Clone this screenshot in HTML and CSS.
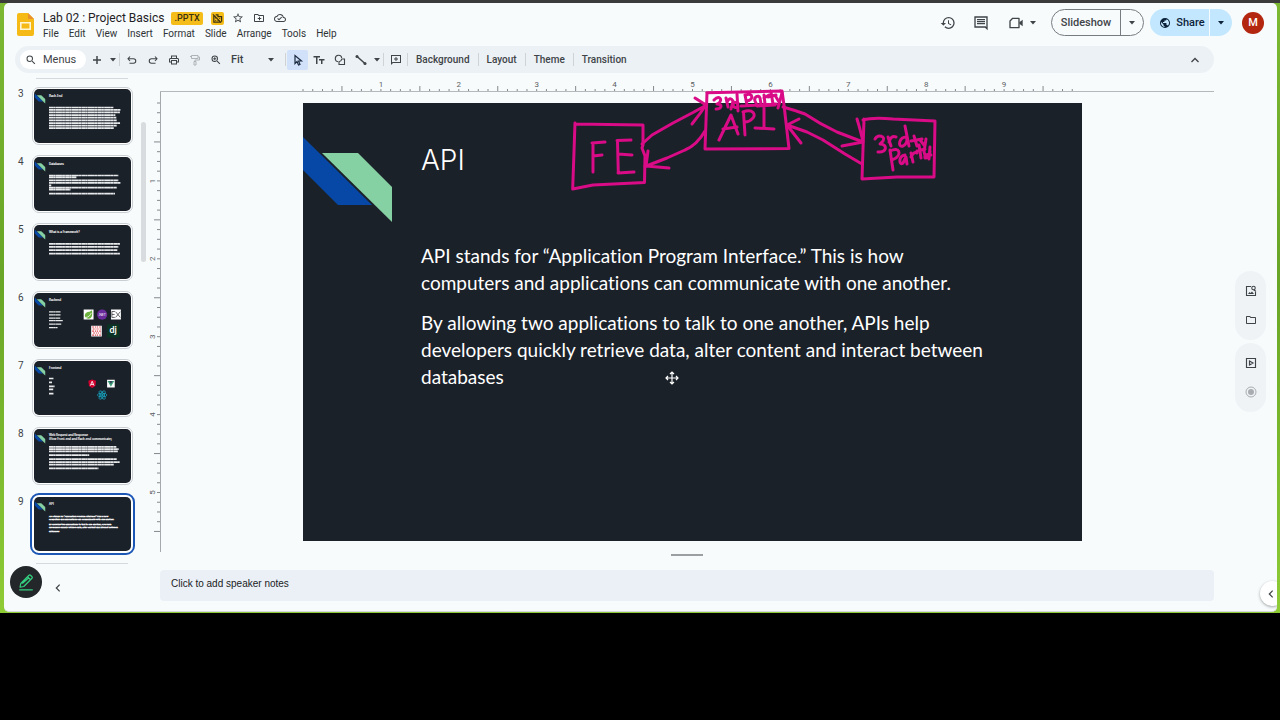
FILE: index.html
```html
<!DOCTYPE html>
<html lang="en">
<head>
  <meta charset="UTF-8">
  <meta name="viewport" content="width=device-width, initial-scale=1.0">
  <title>Lab 02 : Project Basics</title>
  <link rel="stylesheet" href="styles.css">
</head>
<body>
  <svg class="defs" aria-hidden="true">
    <symbol id="ribbon" viewBox="0 0 90 120">
      <path fill="#0748a6" d="M0 34 69 102H35L0 67z"/>
      <path fill="#86d1a3" d="M19 50H55L89 84V119z"/>
    </symbol>
    <symbol id="caret" viewBox="0 0 6 4"><path d="M0 0h6L3 3.5z"/></symbol>
  </svg>

  <div class="desktop">
    <div class="app">
      <header class="header">
        <svg class="logo" viewBox="0 0 17 23">
          <path fill="#f5ba15" d="M2 0h9l6 6v15a2 2 0 0 1-2 2H2a2 2 0 0 1-2-2V2a2 2 0 0 1 2-2z"/>
          <path fill="#e8912d" d="M11 0l6 6h-6z"/>
          <path fill="none" stroke="#fff6d8" stroke-width="1.6" d="M3.8 9.8h9.4v6.4H3.8z"/>
        </svg>
        <div class="doc">
          <div class="doc-row">
            <h1>Lab 02 : Project Basics</h1>
            <span class="badge">.PPTX</span>
            <span class="badge badge-icon">
              <svg viewBox="0 0 24 24"><path d="M2 3l18 18M4 6v14h14M8 4h5v4h8v11M8 10v2M8 15v2M12 16h2M16 12h2" fill="none" stroke="#3b3010" stroke-width="2.6"/></svg>
            </span>
            <button class="icon-btn small" aria-label="Star"><svg viewBox="0 0 24 24"><path d="M22 9.24l-7.19-.62L12 2 9.19 8.63 2 9.24l5.46 4.73L5.82 21 12 17.27 18.18 21l-1.63-7.03L22 9.24zM12 15.4l-3.76 2.27 1-4.28-3.32-2.88 4.38-.38L12 6.1l1.71 4.04 4.38.38-3.32 2.88 1 4.28L12 15.4z"/></svg></button>
            <button class="icon-btn small" aria-label="Move"><svg viewBox="0 0 24 24"><path d="M20 6h-8l-2-2H4c-1.100 0-2 .9-2 2v12c0 1.100.9 2 2 2h16c1.100 0 2-.9 2-2V8c0-1.100-.9-2-2-2zm0 12H4V6h5.200l2 2H20v10zM12 12H9.500v2H12v2.500h2V14h2.500v-2H14V9.500h-2z"/></svg></button>
            <button class="icon-btn small" aria-label="Saved to Drive"><svg viewBox="0 0 24 24"><path d="M19.350 10.040A7.490 7.490 0 0 0 12 4C9.110 4 6.600 5.640 5.350 8.040A5.994 5.994 0 0 0 0 14c0 3.310 2.690 6 6 6h13c2.760 0 5-2.240 5-5 0-2.640-2.050-4.780-4.650-4.960zM19 18H6c-2.210 0-4-1.790-4-4 0-2.050 1.530-3.760 3.560-3.970l1.070-.110.500-.950A5.469 5.469 0 0 1 12 6c2.620 0 4.880 1.860 5.390 4.430l.300 1.500 1.530.110A2.980 2.980 0 0 1 22 15c0 1.650-1.350 3-3 3zm-9-3.820l-2.090-2.090L6.500 13.500 10 17l6.010-6.010-1.410-1.410z"/></svg></button>
          </div>
          <nav class="menu">
            <button>File</button>
            <button>Edit</button>
            <button>View</button>
            <button>Insert</button>
            <button>Format</button>
            <button>Slide</button>
            <button>Arrange</button>
            <button>Tools</button>
            <button>Help</button>
          </nav>
        </div>
        <div class="actions">
          <button class="icon-btn" aria-label="Version history"><svg viewBox="0 0 24 24"><path d="M13 3a9 9 0 0 0-9 9H1l3.890 3.890.070.140L9 12H6c0-3.870 3.130-7 7-7s7 3.130 7 7-3.130 7-7 7c-1.930 0-3.680-.790-4.940-2.060l-1.420 1.420A8.954 8.954 0 0 0 13 21a9 9 0 0 0 0-18zm-1 5v5l4.280 2.540.720-1.210-3.500-2.080V8H12z"/></svg></button>
          <button class="icon-btn" aria-label="Comments"><svg viewBox="0 0 24 24"><path d="M22 2H2v17h16l4 4V2zM4 17V4h16v14l-1-1H4zM6 6h12v2H6zM6 9h12v2H6zM6 12h12v2H6z"/></svg></button>
          <button class="icon-btn call" aria-label="Join a call"><svg viewBox="0 0 24 24"><path d="M7 5h9.500v14H3V9z" fill="none" stroke="#3f4448" stroke-width="2" stroke-linejoin="round"/><path d="M17 11l5-4v10l-5-4z"/></svg><svg class="caret"><use href="#caret"/></svg></button>
          <div class="split slideshow">
            <button>Slideshow</button>
            <button class="more" aria-label="Slideshow options"><svg class="caret"><use href="#caret"/></svg></button>
          </div>
          <div class="split share">
            <button><svg class="globe" viewBox="0 0 24 24"><path d="M12 2a10 10 0 1 0 0 20 10 10 0 0 0 0-20zm-1 17.930A7.990 7.990 0 0 1 4.210 10.210L9 15v1c0 1.100.900 2 2 2v1.930zm6.900-2.540A2 2 0 0 0 16 16h-1v-3c0-.550-.450-1-1-1H8v-2h2c.550 0 1-.450 1-1V7h2c1.100 0 2-.900 2-2v-.410a7.990 7.990 0 0 1 2.900 12.800z"/></svg>Share</button>
            <button class="more" aria-label="Share options"><svg class="caret"><use href="#caret"/></svg></button>
          </div>
          <button class="avatar" aria-label="Account">M</button>
        </div>
      </header>

      <div class="toolbar">
        <button class="search"><svg viewBox="0 0 24 24"><path d="M15.500 14h-.790l-.280-.270A6.471 6.471 0 0 0 16 9.500 6.500 6.500 0 1 0 9.500 16c1.610 0 3.090-.590 4.230-1.570l.270.280v.790l5 4.990L20.490 19l-4.990-5zm-6 0a4.500 4.500 0 1 1 0-9 4.500 4.500 0 0 1 0 9z"/></svg>Menus</button>
        <button class="tool" aria-label="New slide"><svg viewBox="0 0 24 24"><path d="M10.500 4h3v6.500H20v3h-6.500V20h-3v-6.500H4v-3h6.500z"/></svg></button>
        <button class="drop" aria-label="New slide with layout"><svg class="caret"><use href="#caret"/></svg></button>
        <span class="sep"></span>
        <button class="tool" aria-label="Undo"><svg viewBox="0 0 24 24"><path d="M8 5L4 9.500 8 14M5 9.500h10a4.500 4.500 0 0 1 0 9H7" fill="none" stroke="#3f4448" stroke-width="2.200"/></svg></button>
        <button class="tool" aria-label="Redo"><svg viewBox="0 0 24 24"><path d="M16 5l4 4.500-4 4.500M19 9.500H9a4.500 4.500 0 0 0 0 9h8" fill="none" stroke="#3f4448" stroke-width="2.200"/></svg></button>
        <button class="tool" aria-label="Print"><svg viewBox="0 0 24 24"><path d="M19 8h-1V3H6v5H5c-1.660 0-3 1.340-3 3v6h4v4h12v-4h4v-6c0-1.660-1.340-3-3-3zM8 5h8v3H8V5zm8 14H8v-5h8v5zm4-4h-2v-3H6v3H4v-4c0-.550.450-1 1-1h14c.550 0 1 .450 1 1z"/></svg></button>
        <button class="tool" aria-label="Paint format"><svg viewBox="0 0 24 24"><path d="M5 3h13v6H5zM5 5H2M18 6h3v6h-9v3M10 15h4v7h-4z" fill="none" stroke="#aeb3b7" stroke-width="2"/></svg></button>
        <button class="tool" aria-label="Zoom in"><svg viewBox="0 0 24 24"><path d="M15.500 14h-.790l-.280-.270A6.471 6.471 0 0 0 16 9.500 6.500 6.500 0 1 0 9.500 16c1.610 0 3.090-.590 4.230-1.570l.270.280v.790l5 4.990L20.490 19l-4.990-5zm-6 0a4.500 4.500 0 1 1 0-9 4.500 4.500 0 0 1 0 9zM8.500 6.500h2v2h2v2h-2v2h-2v-2h-2v-2h2z"/></svg></button>
        <button class="fit">Fit<svg class="caret"><use href="#caret"/></svg></button>
        <span class="sep"></span>
        <button class="tool active" aria-label="Select"><svg viewBox="0 0 24 24"><path d="M6 3v16l4-4 3 7 3-1.300-3-6.700h6z" fill="none" stroke="#1c2b40" stroke-width="2.400"/></svg></button>
        <button class="tool" aria-label="Text box"><svg viewBox="0 0 24 24"><path d="M1 4h13v3H9v13H6V7H1zM12 10h11v3h-4v7h-3v-7h-4z"/></svg></button>
        <button class="tool" aria-label="Shape"><svg viewBox="0 0 24 24"><path d="M8 15.500A6.500 6.500 0 1 1 15.500 8M15.500 10H21v11H10v-5.500A6.500 6.500 0 0 0 15.500 10z" fill="none" stroke="#3f4448" stroke-width="2.200"/></svg></button>
        <button class="tool" aria-label="Line"><svg viewBox="0 0 24 24"><path d="M3 4l18 16" stroke="#3f4448" stroke-width="3"/><circle cx="4" cy="5" r="3"/><circle cx="20" cy="19" r="3"/></svg></button>
        <button class="drop" aria-label="Line types"><svg class="caret"><use href="#caret"/></svg></button>
        <span class="sep"></span>
        <button class="tool" aria-label="Add comment"><svg viewBox="0 0 24 24"><path d="M2 22V2h20v16H6zM4 17l1-1h15V4H4zM11 6h2v3h3v2h-3v3h-2v-3H8V9h3z"/></svg></button>
        <span class="sep"></span>
        <button class="word">Background</button>
        <span class="sep"></span>
        <button class="word">Layout</button>
        <span class="sep"></span>
        <button class="word">Theme</button>
        <span class="sep"></span>
        <button class="word">Transition</button>
        <button class="tool collapse" aria-label="Hide the menus"><svg viewBox="0 0 24 24"><path d="M5 16l7-7 7 7" fill="none" stroke="#3f4448" stroke-width="2.600"/></svg></button>
      </div>

      <div class="workspace">
        <aside class="filmstrip">
          <ol class="thumbs" start="3">
            <li>
              <span>3</span>
              <svg class="thumb" viewBox="0 0 779 438">
                <use href="#ribbon" width="90" height="120"/>
                <text class="t" x="118" y="66">Back-End</text>
                <path class="b" d="M118 150H642M118 169H699M118 190H693M118 211H656M118 233H664M118 254H667M118 276H696M118 297H667M118 318H645"/>
              </svg>
            </li>
            <li>
              <span>4</span>
              <svg class="thumb" viewBox="0 0 779 438">
                <use href="#ribbon" width="90" height="120"/>
                <text class="t" x="118" y="66">Databases</text>
                <path class="b" d="M118 150H680M118 166H340M118 190H680M118 209H699M118 230H136M118 249H667M118 265H292M118 297H653"/>
              </svg>
            </li>
            <li>
              <span>5</span>
              <svg class="thumb" viewBox="0 0 779 438">
                <use href="#ribbon" width="90" height="120"/>
                <text class="t" x="118" y="66">What is a Framework?</text>
                <path class="b" d="M118 153H693M118 177H680M118 203H672M118 232H693"/>
              </svg>
            </li>
            <li>
              <span>6</span>
              <svg class="thumb" viewBox="0 0 779 438">
                <use href="#ribbon" width="90" height="120"/>
                <text class="t" x="118" y="66">Backend</text>
                <path class="b thin" d="M118 153H211M118 177H211M118 203H209M118 225H230M118 252H217M118 281H187"/>
                <path fill="#fff" d="M399 134h80v80h-80zM621 134h80v80h-80zM460 265h86v88h-86z"/>
                <path fill="#6cb33e" d="M466 140c8 50-4 68-28 68-32 0-38-34-18-48 14-9 34-6 46-20z"/>
                <path stroke="#fff" stroke-width="6" fill="none" d="M412 200c26-4 40-16 48-38"/>
                <circle cx="549" cy="175" r="41" fill="#6a2c9c"/>
                <text x="549" y="184" fill="#fff" font-size="28" text-anchor="middle">.NET</text>
                <path stroke="#333" stroke-width="6" fill="none" d="M652 150h-24v48h24M628 174h22M658 152l38 46M696 152l-38 46"/>
                <path stroke="#d9434a" stroke-width="9" stroke-dasharray="16 7 8 6 11 9" fill="none" d="M468 276h70m-66 16h66m-70 17h70m-62 16h62m-70 17h70"/>
                <path fill="#0b3323" d="M589 254h99v107h-99z"/>
                <text x="638" y="325" fill="#fff" font-size="72" font-weight="700" text-anchor="middle">dj</text>
              </svg>
            </li>
            <li>
              <span>7</span>
              <svg class="thumb" viewBox="0 0 779 438">
                <use href="#ribbon" width="90" height="120"/>
                <text class="t" x="118" y="66">Frontend</text>
                <path class="b" d="M118 142H155M118 174H142M118 206H163M118 230H153M118 265H155"/>
                <path fill="#d6002f" d="M468 150l31 10-5 42-26 16-26-16-5-42z"/>
                <path stroke="#fff" stroke-width="7" fill="none" d="M453 200l15-36 15 36M459 190h18"/>
                <path fill="#fff" d="M589 153h62v62h-62z"/>
                <path fill="#41a07a" d="M593 162h54l-27 46z"/>
                <path fill="#34495e" d="M606 162h28l-14 24z"/>
                <g fill="none" stroke="#16a6c2" stroke-width="6">
                  <ellipse cx="549" cy="276" rx="39" ry="15"/>
                  <ellipse cx="549" cy="276" rx="39" ry="15" transform="rotate(60 549 276)"/>
                  <ellipse cx="549" cy="276" rx="39" ry="15" transform="rotate(120 549 276)"/>
                </g>
                <circle cx="549" cy="276" r="8" fill="#16a6c2"/>
              </svg>
            </li>
            <li>
              <span>8</span>
              <svg class="thumb" viewBox="0 0 779 438">
                <use href="#ribbon" width="90" height="120"/>
                <text class="t" x="118" y="60">Web Request and Response</text>
                <text class="t" x="118" y="88">(How Front-end and Back-end communicate)</text>
                <path class="b" d="M118 145H664M118 163H683M118 182H677M118 211H444M118 244H667M118 268H691M118 289H645M118 319H519"/>
              </svg>
            </li>
            <li class="selected">
              <span>9</span>
              <svg class="thumb" viewBox="0 0 779 438">
                <use href="#ribbon" width="90" height="120"/>
                <text class="t" x="118" y="66">API</text>
                <g class="p">
                  <text x="118" y="160">API stands for “Application Program Interface.” This is how</text>
                  <text x="118" y="187">computers and applications can communicate with one another.</text>
                  <text x="118" y="227">By allowing two applications to talk to one another, APIs help</text>
                  <text x="118" y="254">developers quickly retrieve data, alter content and interact between</text>
                  <text x="118" y="281">databases</text>
                </g>
              </svg>
            </li>
          </ol>
          <div class="scrollbar"></div>
          <button class="hide-strip" aria-label="Hide filmstrip"><svg viewBox="0 0 24 24"><path d="M16 4l-8 8 8 8" fill="none" stroke="#3f4448" stroke-width="3"/></svg></button>
        </aside>

        <main class="editor">
          <div class="ruler-x"><svg id="rulerX" viewBox="0 0 779 13"></svg></div>
          <div class="ruler-y"><svg id="rulerY" viewBox="0 0 11 438"></svg></div>
          <div class="stage">
            <section class="slide">
              <svg class="ribbon"><use href="#ribbon"/></svg>
              <h2>API</h2>
              <p>API stands for “Application Program Interface.” This is how computers and applications can communicate with one another.</p>
              <p>By allowing two applications to talk to one another, APIs help developers quickly retrieve data, alter content and interact between databases</p>
              <!-- pen strokes drawn over the slide -->
              <svg class="ink" viewBox="303 103 779 438">
                <path d="M575 124L643 125 643 145 642 148 645 156 644.500 182.500 593 185 572.700 189 575 123"/>
                <path d="M593 143V172M592 143L605 142M593 156L602 155"/>
                <path d="M617.500 141L618.300 173M617 140.500L631 140M618 154L632 155M618 173L634 172"/>
                <path d="M642 144L652 135 673 123 693 112.500 706.500 105M695 98L706 105Q700 114 692 124"/>
                <path d="M705 131Q697 145 685 150L667 158 645 166.500M648 151L646 166 669 168"/>
                <path d="M706.700 92.700L782 91 784 105 789 148.500 705 149 707 93"/>
                <path d="M719 140L731 115 738 134M723 129L737 127M743.500 112L745 135M743 112C753 108 757 115 752 119Q749 122 745 122M764 107V128M755 128L774 129M757 106L775 105"/>
                <path d="M714 100C719 95 723 99 719 103L717 104C723 104 722 109 716 109M726 98L728 107M727 102Q730 96 733 101L731 109M737 94L738 111M738 103C731 100 732 110 738 107M745 95L747 105M746 95C753 92 754 100 747 101M756 103C752 97 759 94 760 98L761 104M764 95L765 104M764 98L769 95M771 92L773 104M768 97L776 95M776 97L779 102M782 93L778 108M741 106L776 104"/>
                <path d="M783 107Q794 110 805 114 820 124 837 132L863 142M857 119Q861 132 863 142L842 146"/>
                <path d="M862 164L845 154 823 140 807 132 787 125M799 119L787 125 801 143"/>
                <path d="M863 120Q873 117 893 119L935 121 934 177 897 177 862 179 864 119"/>
                <path d="M875 139C878 134 886 136 883 141L880 144C888 144 887 153 878 152M888 137L891 146M889 142Q891 135 896 137M905 126L909 146M907 137C899 136 897 148 903 146Q907 144 907 139"/>
                <path d="M914 136L917 146M911 141L922 139M920 140L924 145M926 139L924 152M890 150L893 170M890 151C900 146 901 154 896 158L892 160M905 155C898 156 899 166 903 163L906 157 907 164M911 153L913 162M911 157Q914 151 917 153M919 145L921 158M917 151L925 149M924 152L926 158Q930 157 930 151M930 147L929 159M931 155Q924 153 925 158"/>
              </svg>
              <svg class="cursor" viewBox="0 0 14 14"><path d="M7 1v12M1 7h12M5 3l2-2 2 2M5 11l2 2 2-2M3 5L1 7l2 2M11 5l2 2-2 2" fill="none" stroke="#fff" stroke-width="1.200"/></svg>
            </section>
          </div>
          <div class="handle"></div>
          <textarea class="notes" rows="1" aria-label="Speaker notes" placeholder="Click to add speaker notes"></textarea>
        </main>

        <aside class="side">
          <div class="side-pill">
            <button class="icon-btn small" aria-label="Images"><svg viewBox="0 0 24 24"><path d="M12 3H3v18h18v-7M17.500 9.500L22 13" fill="none" stroke="#3f4448" stroke-width="2.200"/><circle cx="17" cy="6" r="3.500" fill="none" stroke="#3f4448" stroke-width="2.200"/><path d="M6 18l3-4 2 2 3-3 4 5z"/></svg></button>
            <button class="icon-btn small" aria-label="Files"><svg viewBox="0 0 24 24"><path d="M9.170 6l2 2H20v10H4V6h5.170M10 4H4c-1.100 0-2 .9-2 2v12c0 1.100.9 2 2 2h16c1.100 0 2-.9 2-2V8c0-1.100-.9-2-2-2h-8l-2-2z"/></svg></button>
          </div>
          <div class="side-pill">
            <button class="icon-btn small" aria-label="Record"><svg viewBox="0 0 24 24"><path d="M3 3h18v18H3zM9 8l7 4-7 4z" fill="none" stroke="#3f4448" stroke-width="2.300"/></svg></button>
            <button class="icon-btn small" aria-label="Start recording"><svg viewBox="0 0 24 24"><circle cx="12" cy="12" r="10" fill="none" stroke="#a9adb1" stroke-width="2"/><circle cx="12" cy="12" r="6" fill="#a9adb1"/></svg></button>
          </div>
        </aside>
      </div>

      <button class="pen" aria-label="Annotate"><svg viewBox="0 0 24 24"><path d="M4 19l1-5L16 3q1-1 2 0l2 2q1 1 0 2L9 18zM14 5l4 4M7 14l8-7M3 22.500h18" fill="none" stroke="#35d07f" stroke-width="1.600" stroke-linejoin="round"/></svg></button>
      <button class="side-tab" aria-label="Show side panel"><svg viewBox="0 0 24 24"><path d="M16 4l-8 8 8 8" fill="none" stroke="#3f4448" stroke-width="3"/></svg></button>
    </div>
  </div>

  <script>
    const NS = 'http://www.w3.org/2000/svg';
    const rulerX = document.getElementById('rulerX');
    const rulerY = document.getElementById('rulerY');
    const inch = 77.9;

    function add(svg, name, attrs, text) {
      const el = document.createElementNS(NS, name);
      for (const key in attrs) el.setAttribute(key, attrs[key]);
      if (text) el.textContent = text;
      svg.appendChild(el);
    }

    // eighth-inch ticks, a longer one at each half inch
    for (let i = 0; i < 80; i++) {
      const x = i * inch / 8;
      add(rulerX, 'path', { d: `M${x} ${i % 8 === 4 ? 8 : 11}V13` });
      if (i && i % 8 === 0) add(rulerX, 'text', { x: x, y: 9 }, String(i / 8));
    }
    for (let i = 0; i < 45; i++) {
      const y = i * inch / 8;
      add(rulerY, 'path', { d: `M${i % 8 === 4 ? 5 : 8} ${y}H11` });
      if (i && i % 8 === 0) add(rulerY, 'text', { x: 0, y: 0, transform: `translate(6 ${y}) rotate(-90)` }, String(i / 8));
    }
  </script>
</body>
</html>
```
FILE: styles.css
```css
* { box-sizing: border-box; }
body {
  margin: 0;
  background: #000;
  font-family: Roboto, "Open Sans", sans-serif;
  font-size: 11px;
  color: #3f4448;
}
button {
  border: none;
  background: none;
  padding: 0;
  margin: 0;
  font: inherit;
  color: inherit;
  cursor: pointer;
}
svg { display: block; fill: #3f4448; }
.defs { position: absolute; width: 0; height: 0; }

.desktop {
  padding: 0 3px 1px 4px;
  border-top: 3px solid #3b3b3b;
  background: linear-gradient(#7cb832, #69a526 45%, #8ecb35);
}
.app {
  position: relative;
  background: #f7fbfc;
  border-radius: 5px;
  border-bottom: 1px solid #d5d9da;
  overflow: hidden;
}

/* header */
.header { display: flex; height: 43px; padding: 6px 13px 0 13px; }
.logo { width: 17px; height: 23px; margin: 4px 9px 0 0; }
.doc-row { display: flex; align-items: center; height: 18px; }
.doc-row h1 {
  margin: 0 7px 0 0;
  font-size: 12px;
  font-weight: 400;
  color: #1f2225;
  white-space: nowrap;
}
.badge {
  padding: 0 3px;
  margin-right: 8px;
  border-radius: 2px;
  background: #f4bd1a;
  color: #3b3010;
  font-size: 9px;
  font-weight: 500;
  line-height: 13px;
}
.badge-icon { padding: 1px; margin-right: 4px; }
.badge-icon svg { width: 11px; height: 11px; }
.icon-btn { display: flex; justify-content: center; align-items: center; width: 33px; }
.icon-btn svg { width: 16px; height: 16px; }
.icon-btn.small { width: 21px; }
.icon-btn.small svg { width: 12px; height: 12px; }
.menu { display: flex; gap: 10px; font-size: 10px; line-height: 13px; color: #2f3336; }
.caret, .icon-btn .caret, .split .caret { width: 6px; height: 4px; }

.actions { display: flex; align-items: center; height: 27px; margin-left: auto; }
.icon-btn.call { width: 42px; gap: 6px; padding-left: 8px; margin-right: 12px; }
.split { display: flex; height: 27px; border-radius: 14px; font-weight: 500; }
.split button { display: flex; align-items: center; justify-content: center; }
.split .more { width: 23px; }
.slideshow { border: 1px solid #777c80; margin-right: 6px; }
.slideshow button { width: 68px; }
.slideshow .more { border-left: 1px solid #777c80; }
.share { background: #c2e7fe; color: #0b2239; margin-right: 10px; }
.share button { width: 59px; gap: 5px; padding-left: 5px; }
.share svg { fill: #0b2239; }
.share .globe { width: 12px; height: 12px; }
.share .more { padding: 0; border-left: 1px solid #f7fbfc; }
.avatar {
  width: 22px;
  height: 22px;
  border-radius: 50%;
  background: #b3260f;
  color: #fff;
  font-weight: 500;
}

/* toolbar */
.toolbar {
  display: flex;
  align-items: center;
  height: 27px;
  margin: 0 63px 0 11px;
  padding: 0 9px 0 5px;
  border-radius: 14px;
  background: #ecf1f5;
  font-weight: 500;
}
.search {
  display: flex;
  align-items: center;
  gap: 6px;
  width: 66px;
  height: 19px;
  padding-left: 5px;
  border-radius: 10px;
  background: #fff;
  font-weight: 400;
}
.search svg { width: 12px; height: 12px; }
.tool {
  display: flex;
  justify-content: center;
  align-items: center;
  width: 21px;
  height: 20px;
  border-radius: 2px;
}
.tool svg { width: 12px; height: 12px; }
.tool.active { background: #d0e1f9; }
.drop { width: 11px; display: flex; justify-content: center; }
.fit { display: flex; align-items: center; justify-content: space-between; width: 54px; padding: 0 6px 0 5px; margin-right: 4px; }
.sep { width: 1px; height: 13px; margin: 0 1px; background: #cfd3d6; }
.word { padding: 0 7px; font-size: 10px; }
.collapse { margin-left: auto; }

/* workspace */
.workspace { display: flex; align-items: stretch; }
.filmstrip { position: relative; width: 145px; flex: none; padding: 5px 0 0 14px; }
.thumbs { list-style: none; margin: 0; padding: 9px 0 0; }
.thumbs::before, .thumbs::after {
  content: "";
  display: block;
  width: 92px;
  height: 1px;
  margin: -9px 0 8px 18px;
  background: #d5d9dd;
}
.thumbs::after { margin: 0 0 0 18px; }
.thumbs li { display: flex; height: 58px; margin-bottom: 10px; }
.thumbs span { width: 14px; padding-top: 1px; font-size: 10px; line-height: 12px; }
.thumb {
  width: 101px;
  height: 58px;
  padding: 1px;
  border: 1px solid #c9ced3;
  border-radius: 7px;
  background: linear-gradient(#1b2129, #1b2129) content-box, #fff;
  overflow: hidden;
}
.selected .thumb { outline: 2px solid #1c57b5; border-color: #fff; }
.thumb text { font-family: Lato, sans-serif; }
.thumb .t { font-family: Inter, sans-serif; font-size: 24px; fill: #fff; stroke: #fff; stroke-width: 1px; }
.thumb .b { fill: none; stroke: #e8eaec; stroke-width: 14px; stroke-dasharray: 34 1 17 2 51 1 23 2; }
.thumb .thin { stroke-width: 10px; }
.thumb .p { font-size: 19px; fill: #fff; stroke: #fff; stroke-width: 3px; }
.scrollbar {
  position: absolute;
  top: 49px;
  right: 3px;
  width: 5px;
  height: 140px;
  border-radius: 3px;
  background: #d9dcdf;
}
.hide-strip { margin: 19px 0 0 35px; padding: 0; }
.hide-strip svg, .side-tab svg { width: 10px; height: 10px; }

.editor {
  flex: 1;
  display: grid;
  grid-template-columns: 11px 1fr;
  padding: 5px 0 10px;
}
.ruler-x {
  grid-column: 2;
  padding: 0 132px 0 143px;
  border-bottom: 1px solid #b4b8bb;
}
.ruler-x svg, .ruler-y svg { width: 100%; overflow: visible; stroke: #85898d; }
.ruler-x text, .ruler-y text { stroke: none; fill: #5c6064; font-size: 8px; text-anchor: middle; }
.ruler-y { padding: 11px 0; }
.stage { padding: 11px 132px 11px 142px; border-left: 1px solid #a5a9ac; }
.slide {
  position: relative;
  aspect-ratio: 779 / 438;
  padding: 40px 88px 0 118px;
  background: #1b2129;
  color: #fff;
  font-family: Lato, sans-serif;
  font-size: 19px;
  font-variant-ligatures: none;
  line-height: 27px;
}
.slide h2 {
  margin: 0 0 65px;
  font-family: Inter, sans-serif;
  font-size: 28px;
  font-weight: 300;
  line-height: 34px;
}
.slide p { margin: 0 0 13px; }
.ribbon { position: absolute; left: 0; top: 0; width: 90px; height: 120px; }
.ink {
  position: absolute;
  inset: 0;
  overflow: visible;
  fill: none;
  stroke: #d90b86;
  stroke-width: 3px;
  stroke-linecap: round;
  stroke-linejoin: round;
}
.cursor { position: absolute; left: 362px; top: 268px; width: 14px; height: 14px; }
.handle { grid-column: 2; width: 32px; height: 2px; margin: 2px auto 14px; background: #9b9fa2; }
.notes {
  grid-column: 2;
  width: 100%;
  height: 31px;
  padding: 7px 11px;
  border: none;
  border-radius: 4px;
  resize: none;
  background: #eaf0f6;
  font: 10px/14px "Liberation Sans", Arial, sans-serif;
}
.notes::placeholder { color: #202124; }

.side { width: 63px; padding: 198px 0 0 21px; }
.side-pill {
  display: flex;
  flex-direction: column;
  align-items: center;
  gap: 17px;
  width: 31px;
  padding: 14px 0;
  margin-bottom: 3px;
  border-radius: 16px;
  background: #eff3f6;
}

.pen {
  position: absolute;
  left: 6px;
  bottom: 13px;
  width: 32px;
  height: 32px;
  padding: 7px;
  border-radius: 50%;
  background: #23272a;
}
.side-tab {
  position: absolute;
  right: -8px;
  bottom: 5px;
  width: 25px;
  height: 25px;
  padding-left: 6px;
  border-radius: 50%;
  background: #fff;
  box-shadow: 0 1px 3px rgba(0,0,0,0.35);
}
```
